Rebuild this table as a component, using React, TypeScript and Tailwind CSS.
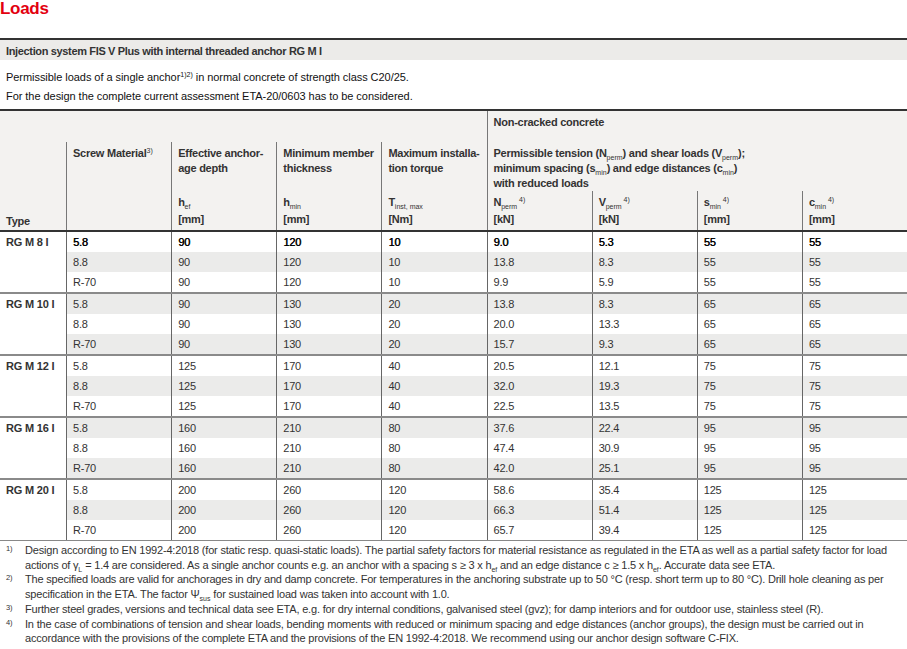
import React from "react";

const groups = [
	{
		type: "RG M 8 I",
		rows: [
			["5.8", "90", "120", "10", "9.0", "5.3", "55", "55"],
			["8.8", "90", "120", "10", "13.8", "8.3", "55", "55"],
			["R-70", "90", "120", "10", "9.9", "5.9", "55", "55"],
		],
	},
	{
		type: "RG M 10 I",
		rows: [
			["5.8", "90", "130", "20", "13.8", "8.3", "65", "65"],
			["8.8", "90", "130", "20", "20.0", "13.3", "65", "65"],
			["R-70", "90", "130", "20", "15.7", "9.3", "65", "65"],
		],
	},
	{
		type: "RG M 12 I",
		rows: [
			["5.8", "125", "170", "40", "20.5", "12.1", "75", "75"],
			["8.8", "125", "170", "40", "32.0", "19.3", "75", "75"],
			["R-70", "125", "170", "40", "22.5", "13.5", "75", "75"],
		],
	},
	{
		type: "RG M 16 I",
		rows: [
			["5.8", "160", "210", "80", "37.6", "22.4", "95", "95"],
			["8.8", "160", "210", "80", "47.4", "30.9", "95", "95"],
			["R-70", "160", "210", "80", "42.0", "25.1", "95", "95"],
		],
	},
	{
		type: "RG M 20 I",
		rows: [
			["5.8", "200", "260", "120", "58.6", "35.4", "125", "125"],
			["8.8", "200", "260", "120", "66.3", "51.4", "125", "125"],
			["R-70", "200", "260", "120", "65.7", "39.4", "125", "125"],
		],
	},
];

function Sub({ children }: { children: React.ReactNode }) {
	return <span className="text-[7px] leading-[0] align-[-3px] font-normal tracking-normal">{children}</span>;
}

function Sup({ children }: { children: React.ReactNode }) {
	return <span className="text-[7px] leading-[0] align-[4px] font-normal tracking-normal">{children}</span>;
}

function Note({ mark, children }: { mark: string; children: React.ReactNode }) {
	return (
		<div className="flex">
			<div className="w-[25px] shrink-0 pl-[6px] text-[7.5px] leading-[11px]">{mark}</div>
			<div className="flex-1 whitespace-nowrap">{children}</div>
		</div>
	);
}

export default function App() {
	let rowIndex = 0;

	return (
		<div className="w-[907px] h-[649px] bg-white text-[#2b2b2b] font-['Liberation_Sans',Arial,sans-serif] text-[11px] overflow-hidden">
			<div className="h-[38px] text-[17px] font-bold leading-[17px] text-[#e3000f] tracking-[-0.3px]">
				Loads
			</div>

			<div className="border-t-2 border-[#333] bg-[#ecebe9] h-[22px] flex items-center pl-[6px] pt-[2px] font-bold text-[11px] tracking-[-0.35px] text-[#333]">
				Injection system FIS V Plus with internal threaded anchor RG M I
			</div>

			<div className="pl-[6px] pt-[8px] pb-[3px] leading-[19px] text-[11px] tracking-[-0.05px] text-[#111]">
				<div>
					Permissible loads of a single anchor<Sup>1)2)</Sup> in normal concrete of strength class C20/25.
				</div>
				<div>For the design the complete current assessment ETA-20/0603 has to be considered.</div>
			</div>

			<div className="grid grid-cols-[66px_repeat(8,minmax(0,1fr))] grid-rows-[31px_49px_39px] border-t-2 border-b-2 border-[#333] bg-[#f3f2f0] font-bold text-[11px] tracking-[-0.25px] leading-[15px] text-[#333]">
				<div className="col-span-5" />
				<div className="col-span-4 border-l border-[#777] pl-[6px] pt-[4px]">Non-cracked concrete</div>

				<div />
				<div className="border-l border-[#777] pl-[6px] pt-[4px]">
					Screw Material<Sup>3)</Sup>
				</div>
				<div className="border-l border-[#777] pl-[6px] pt-[4px]">
					Effective anchor-
					<br />
					age depth
				</div>
				<div className="border-l border-[#777] pl-[6px] pt-[4px]">
					Minimum member
					<br />
					thickness
				</div>
				<div className="border-l border-[#777] pl-[6px] pt-[4px]">
					Maximum installa-
					<br />
					tion torque
				</div>
				<div className="col-span-4 border-l border-[#777] pl-[6px] pt-[4px]">
					Permissible tension (N<Sub>perm</Sub>) and shear loads (V<Sub>perm</Sub>);
					<br />
					minimum spacing (s<Sub>min</Sub>) and edge distances (c<Sub>min</Sub>)
					<br />
					with reduced loads
				</div>

				<div className="flex items-end pl-[6px] pb-[0px] leading-[17px]">Type</div>
				<div className="border-l border-[#777]" />
				<div className="border-l border-[#777] pl-[6px] pt-[3px] leading-[17px]">
					<div>
						h<Sub>ef</Sub>
					</div>
					<div>[mm]</div>
				</div>
				<div className="border-l border-[#777] pl-[6px] pt-[3px] leading-[17px]">
					<div>
						h<Sub>min</Sub>
					</div>
					<div>[mm]</div>
				</div>
				<div className="border-l border-[#777] pl-[6px] pt-[3px] leading-[17px]">
					<div>
						T<Sub>inst, max</Sub>
					</div>
					<div>[Nm]</div>
				</div>
				<div className="border-l border-[#777] pl-[6px] pt-[3px] leading-[17px]">
					<div>
						N<Sub>perm</Sub>
						<Sup>&nbsp;4)</Sup>
					</div>
					<div>[kN]</div>
				</div>
				<div className="border-l border-[#777] pl-[6px] pt-[3px] leading-[17px]">
					<div>
						V<Sub>perm</Sub>
						<Sup>&nbsp;4)</Sup>
					</div>
					<div>[kN]</div>
				</div>
				<div className="border-l border-[#777] pl-[6px] pt-[3px] leading-[17px]">
					<div>
						s<Sub>min</Sub>
						<Sup>&nbsp;4)</Sup>
					</div>
					<div>[mm]</div>
				</div>
				<div className="border-l border-[#777] pl-[6px] pt-[3px] leading-[17px]">
					<div>
						c<Sub>min</Sub>
						<Sup>&nbsp;4)</Sup>
					</div>
					<div>[mm]</div>
				</div>
			</div>

			<div className="border-b border-[#888] text-[11px] tracking-[-0.2px] text-[#333]">
				{groups.map((group, groupIndex) => (
					<div
						key={group.type}
						className={`flex ${groupIndex > 0 ? "border-t-2 border-[#8a8a8a]" : ""}`}
					>
						<div className="w-[66px] shrink-0 bg-white pl-[6px] font-bold leading-[20px]">{group.type}</div>
						<div className="flex-1">
							{group.rows.map((cells) => {
								const striped = rowIndex % 2 === 1;
								const first = rowIndex === 0;
								rowIndex += 1;
								return (
									<div
										key={`${group.type}_${cells[0]}`}
										className={`grid grid-cols-8 h-[20px] leading-[20px] ${striped ? "bg-[#ebebea]" : "bg-white"} ${first ? "text-black [text-shadow:0.4px_0_0_#000]" : ""}`}
									>
										{cells.map((value, cellIndex) => (
											<div key={`cell_${cellIndex}`} className="border-l border-[#666] pl-[6px]">
												{value}
											</div>
										))}
									</div>
								);
							})}
						</div>
					</div>
				))}
			</div>

			<div className="pt-[2px] leading-[14.7px] text-[11px] tracking-[-0.19px] text-[#333]">
				<Note mark="1)">
					Design according to EN 1992-4:2018 (for static resp. quasi-static loads). The partial safety factors for material resistance as regulated in the ETA as well as a partial safety factor for load
					<br />
					actions of γ<Sub>L</Sub> = 1.4 are considered. As a single anchor counts e.g. an anchor with a spacing s ≥ 3 x h<Sub>ef</Sub> and an edge distance c ≥ 1.5 x h<Sub>ef</Sub>. Accurate data see ETA.
				</Note>
				<Note mark="2)">
					The specified loads are valid for anchorages in dry and damp concrete. For temperatures in the anchoring substrate up to 50 °C (resp. short term up to 80 °C). Drill hole cleaning as per
					<br />
					specification in the ETA. The factor Ψ<Sub>sus</Sub> for sustained load was taken into account with 1.0.
				</Note>
				<Note mark="3)">
					Further steel grades, versions and technical data see ETA, e.g. for dry internal conditions, galvanised steel (gvz); for damp interiors and for outdoor use, stainless steel (R).
				</Note>
				<Note mark="4)">
					In the case of combinations of tension and shear loads, bending moments with reduced or minimum spacing and edge distances (anchor groups), the design must be carried out in
					<br />
					accordance with the provisions of the complete ETA and the provisions of the EN 1992-4:2018. We recommend using our anchor design software C-FIX.
				</Note>
			</div>
		</div>
	);
}
